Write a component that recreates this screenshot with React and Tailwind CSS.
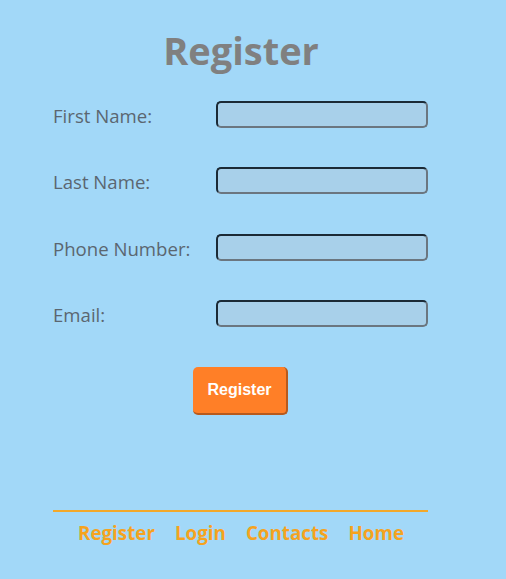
const FIELDS = ["First Name:", "Last Name:", "Phone Number:", "Email:"];
const LINKS = ["Register", "Login", "Contacts", "Home"];

export default function App() {
  return (
    <div className="min-h-[579px] w-[506px] bg-[#a2d8f8] font-['Open_Sans','Noto_Sans',sans-serif]">
      <div className="ml-[53px] w-[375px] pt-[26px] flex flex-col">
        <h1 className="text-center text-[38px] leading-[48px] font-bold text-[#808080] pl-[1px]">Register</h1>

        <form className="mt-[27px] flex flex-col gap-[39.4px]" onSubmit={e => e.preventDefault()}>
          {FIELDS.map(label => (
            <div key={label} className="flex items-center h-[27px]">
              <label className="w-[163px] pt-[3px] text-[18.6px] text-[#5b6670]">{label}</label>
              <input
                type="text"
                className="w-[212px] h-[27px] rounded-[5px] bg-[#a8d0ea] border-2 border-t-[#1b2a36] border-l-[#1b2a36] border-r-[#6b7680] border-b-[#6b7680] outline-none"
              />
            </div>
          ))}

          <div className="flex justify-center">
            <button
              type="submit"
              className="w-[95px] h-[48px] rounded-[5px] bg-[#ff7f27] text-white font-bold text-[16px] font-['Liberation_Sans',Arial,sans-serif] border-r-2 border-b-2 border-[#b85a1c]">
              Register
            </button>
          </div>
        </form>

        <div className="mt-[95px] border-t-2 border-[#f2a82a] flex justify-center gap-[20px] pt-[8px] pl-[1px]">
          {LINKS.map(l => (
            <a key={l} href="#" className="text-[18.8px] font-bold text-[#f5a31f] leading-[26px]">{l}</a>
          ))}
        </div>
      </div>
    </div>
  );
}
